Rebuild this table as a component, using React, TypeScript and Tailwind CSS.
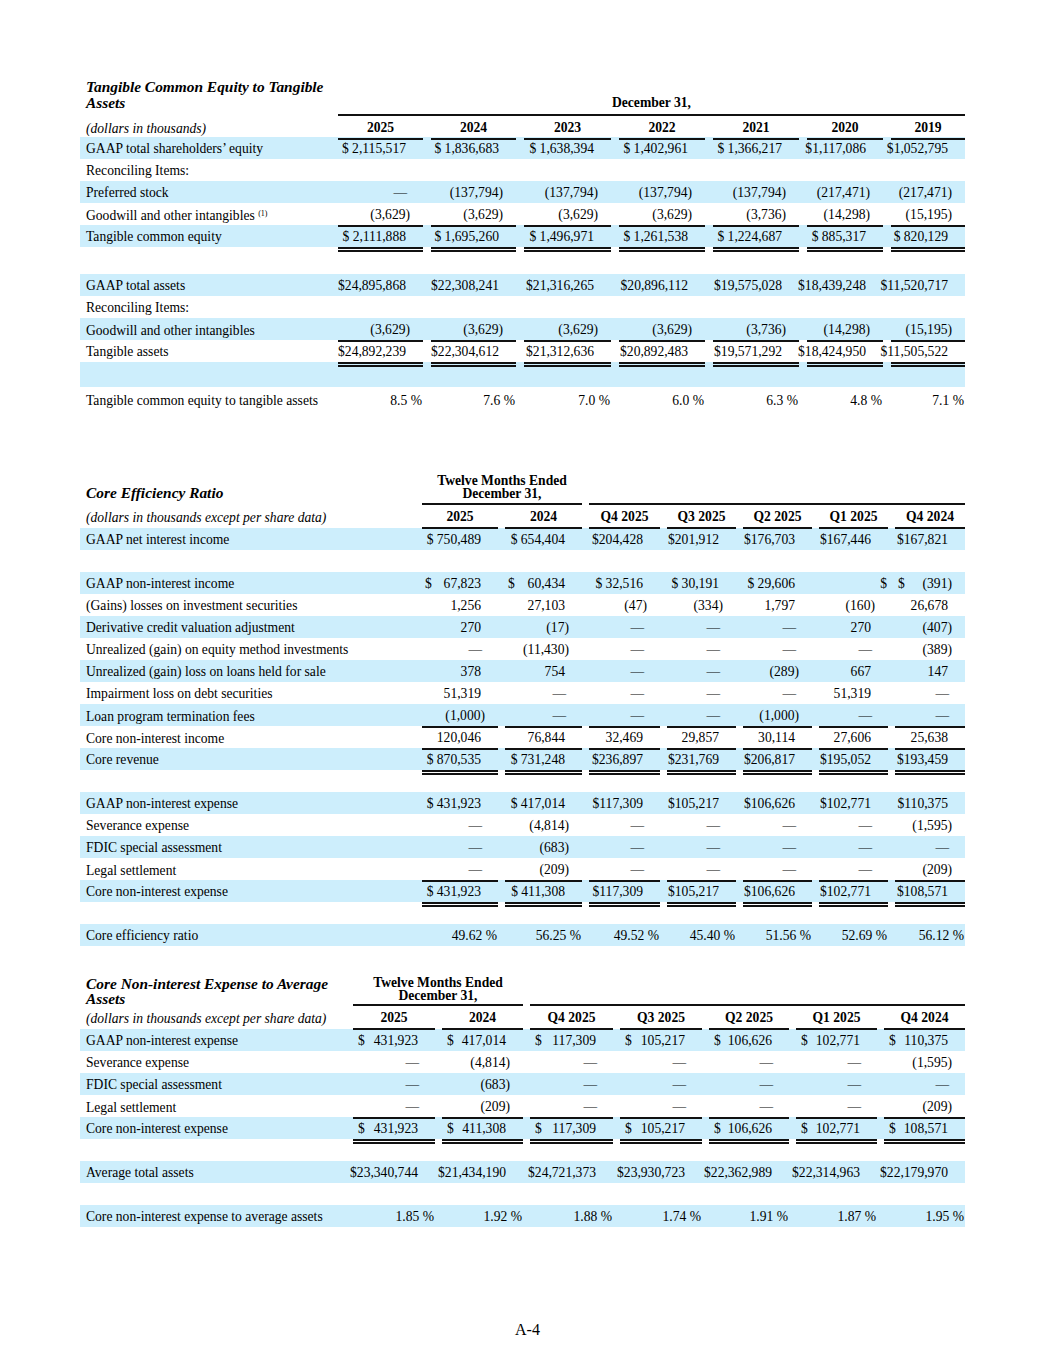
import React from "react";

type Cell = string | { d: string; v: string } | null;

type Row = {
  label?: React.ReactNode;
  blue?: boolean;
  cells?: Cell[];
  under?: boolean;
  dbl?: boolean;
  h?: string;
};

type TableDef = {
  grid: string;
  gap: string;
  dpl: string;
  top: React.ReactNode;
  unit: string;
  heads: string[];
  headH: string;
  rows: Row[];
};

const D = "—";

function padFor(c: string) {
  if (c === "$") return "pr-[1px]";
  if (c.endsWith("%")) return "pr-[1px]";
  if (c.endsWith(")")) return "pr-[13px]";
  if (c === D) return "pr-[16px]";
  return "pr-[17px]";
}

function Value({ c, dpl, under, dbl }: { c: Cell; dpl: string; under?: boolean; dbl?: boolean }) {
  const line = under ? "border-b-2 border-[#111]" : dbl ? "border-t-[5px] border-double border-[#111]" : "";
  if (c && typeof c === "object") {
    return (
      <div className={`flex h-full items-center justify-between whitespace-nowrap pt-[2px] ${dpl} ${padFor(c.v)} ${line}`}>
        <span>{c.d}</span>
        <span>{c.v}</span>
      </div>
    );
  }
  return (
    <div className={`flex h-full items-center justify-end whitespace-nowrap pt-[2px] ${c ? padFor(c) : ""} ${line}`}>
      {c}
    </div>
  );
}

function Table({ t }: { t: TableDef }) {
  return (
    <div>
      {t.top}
      <div className={`grid ${t.grid} ${t.headH}`}>
        <div className="flex items-center pt-[2px] pl-[6px] italic whitespace-nowrap">{t.unit}</div>
        {t.heads.map((h) => (
          <div key={h} className={t.gap}>
            <div className="flex h-full items-center justify-center border-b-2 border-[#111] pt-[2px] font-bold">{h}</div>
          </div>
        ))}
      </div>
      {t.rows.map((r, i) => (
        <div key={i} className={`grid ${t.grid} ${r.h ?? "h-[22px]"} ${r.blue ? "bg-[#cdeefc]" : ""}`}>
          <div className="flex items-center pt-[2px] pl-[6px] whitespace-nowrap">{r.label}</div>
          {Array.from({ length: 7 }).map((_, j) => (
            <div key={j} className={t.gap}>
              <Value c={r.cells ? r.cells[j] : null} dpl={t.dpl} under={r.under} dbl={r.dbl} />
            </div>
          ))}
        </div>
      ))}
    </div>
  );
}

const s = (v: string) => ({ d: "$", v });

const tangible: TableDef = {
  grid: "grid-cols-[250px_93px_93px_95px_94px_94px_84px_82px]",
  gap: "pl-2",
  dpl: "pl-[3px]",
  headH: "h-[21px]",
  unit: "(dollars in thousands)",
  heads: ["2025", "2024", "2023", "2022", "2021", "2020", "2019"],
  top: (
    <div className="grid grid-cols-[250px_93px_93px_95px_94px_94px_84px_82px] items-end">
      <div className="pb-[5px] pl-[6px] text-[15.4px] leading-[16px] font-bold italic whitespace-nowrap">
        Tangible Common Equity to Tangible
        <br />
        Assets
      </div>
      <div className="col-span-7 pl-2">
        <div className="border-b-2 border-[#111] pb-[3px] text-center leading-[16px] font-bold">December 31,</div>
      </div>
    </div>
  ),
  rows: [
    {
      label: "GAAP total shareholders’ equity",
      blue: true,
      cells: ["$ 2,115,517", "$ 1,836,683", "$ 1,638,394", "$ 1,402,961", "$ 1,366,217", "$1,117,086", "$1,052,795"],
    },
    { label: "Reconciling Items:" },
    {
      label: "Preferred stock",
      blue: true,
      cells: [D, "(137,794)", "(137,794)", "(137,794)", "(137,794)", "(217,471)", "(217,471)"],
    },
    {
      label: (
        <span>
          Goodwill and other intangibles <sup className="text-[8px]">(1)</sup>
        </span>
      ),
      cells: ["(3,629)", "(3,629)", "(3,629)", "(3,629)", "(3,736)", "(14,298)", "(15,195)"],
      under: true,
    },
    {
      label: "Tangible common equity",
      blue: true,
      cells: ["$ 2,111,888", "$ 1,695,260", "$ 1,496,971", "$ 1,261,538", "$ 1,224,687", "$ 885,317", "$ 820,129"],
    },
    { dbl: true, h: "h-[27px]" },
    {
      label: "GAAP total assets",
      blue: true,
      cells: ["$24,895,868", "$22,308,241", "$21,316,265", "$20,896,112", "$19,575,028", "$18,439,248", "$11,520,717"],
    },
    { label: "Reconciling Items:" },
    {
      label: "Goodwill and other intangibles",
      blue: true,
      cells: ["(3,629)", "(3,629)", "(3,629)", "(3,629)", "(3,736)", "(14,298)", "(15,195)"],
      under: true,
    },
    {
      label: "Tangible assets",
      cells: ["$24,892,239", "$22,304,612", "$21,312,636", "$20,892,483", "$19,571,292", "$18,424,950", "$11,505,522"],
    },
    { blue: true, dbl: true, h: "h-[25px]" },
    {
      label: "Tangible common equity to tangible assets",
      h: "h-[26px]",
      cells: ["8.5 %", "7.6 %", "7.0 %", "6.0 %", "6.3 %", "4.8 %", "7.1 %"],
    },
  ],
};

const efficiency: TableDef = {
  grid: "grid-cols-[335px_83px_84px_78px_76px_76px_76px_77px]",
  gap: "pl-[7px]",
  dpl: "pl-[3px]",
  headH: "h-[23px]",
  unit: "(dollars in thousands except per share data)",
  heads: ["2025", "2024", "Q4 2025", "Q3 2025", "Q2 2025", "Q1 2025", "Q4 2024"],
  top: (
    <div className="grid grid-cols-[335px_83px_84px_78px_76px_76px_76px_77px] items-end">
      <div className="pb-[4px] pl-[6px] text-[15.4px] leading-[16px] font-bold italic">Core Efficiency Ratio</div>
      <div className="col-span-2 pl-[7px]">
        <div className="border-b-2 border-[#111] pb-[3px] text-center leading-[13px] font-bold">
          Twelve Months Ended
          <br />
          December 31,
        </div>
      </div>
      <div className="col-span-5 pl-[7px]">
        <div className="border-b-2 border-[#111]" />
      </div>
    </div>
  ),
  rows: [
    {
      label: "GAAP net interest income",
      blue: true,
      cells: ["$ 750,489", "$ 654,404", "$204,428", "$201,912", "$176,703", "$167,446", "$167,821"],
    },
    {},
    {
      label: "GAAP non-interest income",
      blue: true,
      cells: [s("67,823"), s("60,434"), "$ 32,516", "$ 30,191", "$ 29,606", "$", s("(391)")],
    },
    {
      label: "(Gains) losses on investment securities",
      cells: ["1,256", "27,103", "(47)", "(334)", "1,797", "(160)", "26,678"],
    },
    {
      label: "Derivative credit valuation adjustment",
      blue: true,
      cells: ["270", "(17)", D, D, D, "270", "(407)"],
    },
    {
      label: "Unrealized (gain) on equity method investments",
      cells: [D, "(11,430)", D, D, D, D, "(389)"],
    },
    {
      label: "Unrealized (gain) loss on loans held for sale",
      blue: true,
      cells: ["378", "754", D, D, "(289)", "667", "147"],
    },
    {
      label: "Impairment loss on debt securities",
      cells: ["51,319", D, D, D, D, "51,319", D],
    },
    {
      label: "Loan program termination fees",
      blue: true,
      cells: ["(1,000)", D, D, D, "(1,000)", D, D],
      under: true,
    },
    {
      label: "Core non-interest income",
      cells: ["120,046", "76,844", "32,469", "29,857", "30,114", "27,606", "25,638"],
      under: true,
    },
    {
      label: "Core revenue",
      blue: true,
      cells: ["$ 870,535", "$ 731,248", "$236,897", "$231,769", "$206,817", "$195,052", "$193,459"],
    },
    { dbl: true },
    {
      label: "GAAP non-interest expense",
      blue: true,
      cells: ["$ 431,923", "$ 417,014", "$117,309", "$105,217", "$106,626", "$102,771", "$110,375"],
    },
    { label: "Severance expense", cells: [D, "(4,814)", D, D, D, D, "(1,595)"] },
    { label: "FDIC special assessment", blue: true, cells: [D, "(683)", D, D, D, D, D] },
    { label: "Legal settlement", cells: [D, "(209)", D, D, D, D, "(209)"], under: true },
    {
      label: "Core non-interest expense",
      blue: true,
      cells: ["$ 431,923", "$ 411,308", "$117,309", "$105,217", "$106,626", "$102,771", "$108,571"],
    },
    { dbl: true },
    {
      label: "Core efficiency ratio",
      blue: true,
      cells: ["49.62 %", "56.25 %", "49.52 %", "45.40 %", "51.56 %", "52.69 %", "56.12 %"],
    },
  ],
};

const expense: TableDef = {
  grid: "grid-cols-[266px_89px_88px_90px_89px_87px_88px_88px]",
  gap: "pl-[7px]",
  dpl: "pl-[5px]",
  headH: "h-[23px]",
  unit: "(dollars in thousands except per share data)",
  heads: ["2025", "2024", "Q4 2025", "Q3 2025", "Q2 2025", "Q1 2025", "Q4 2024"],
  top: (
    <div className="grid grid-cols-[266px_89px_88px_90px_89px_87px_88px_88px] items-end">
      <div className="pl-[6px] text-[15.4px] leading-[15px] font-bold italic whitespace-nowrap">
        Core Non-interest Expense to Average
        <br />
        Assets
      </div>
      <div className="col-span-2 pl-[7px]">
        <div className="border-b-2 border-[#111] pb-[2px] text-center leading-[13px] font-bold">
          Twelve Months Ended
          <br />
          December 31,
        </div>
      </div>
      <div className="col-span-5 pl-[7px]">
        <div className="border-b-2 border-[#111]" />
      </div>
    </div>
  ),
  rows: [
    {
      label: "GAAP non-interest expense",
      blue: true,
      cells: [s("431,923"), s("417,014"), s("117,309"), s("105,217"), s("106,626"), s("102,771"), s("110,375")],
    },
    { label: "Severance expense", cells: [D, "(4,814)", D, D, D, D, "(1,595)"] },
    { label: "FDIC special assessment", blue: true, cells: [D, "(683)", D, D, D, D, D] },
    { label: "Legal settlement", cells: [D, "(209)", D, D, D, D, "(209)"], under: true },
    {
      label: "Core non-interest expense",
      blue: true,
      cells: [s("431,923"), s("411,308"), s("117,309"), s("105,217"), s("106,626"), s("102,771"), s("108,571")],
    },
    { dbl: true },
    {
      label: "Average total assets",
      blue: true,
      cells: ["$23,340,744", "$21,434,190", "$24,721,373", "$23,930,723", "$22,362,989", "$22,314,963", "$22,179,970"],
    },
    {},
    {
      label: "Core non-interest expense to average assets",
      blue: true,
      cells: ["1.85 %", "1.92 %", "1.88 %", "1.74 %", "1.91 %", "1.87 %", "1.95 %"],
    },
  ],
};

export default function App() {
  return (
    <div className="min-h-screen bg-white font-['Liberation_Serif','Times_New_Roman',serif] text-[13.6px] text-black">
      <div className="ml-[80px] w-[885px] pt-[79px] pb-10">
        <Table t={tangible} />
        <div className="mt-[61px]">
          <Table t={efficiency} />
        </div>
        <div className="mt-[30px]">
          <Table t={expense} />
        </div>
      </div>
      <div className="mt-[53px] text-center text-[16px] leading-[20px]">A-4</div>
    </div>
  );
}
